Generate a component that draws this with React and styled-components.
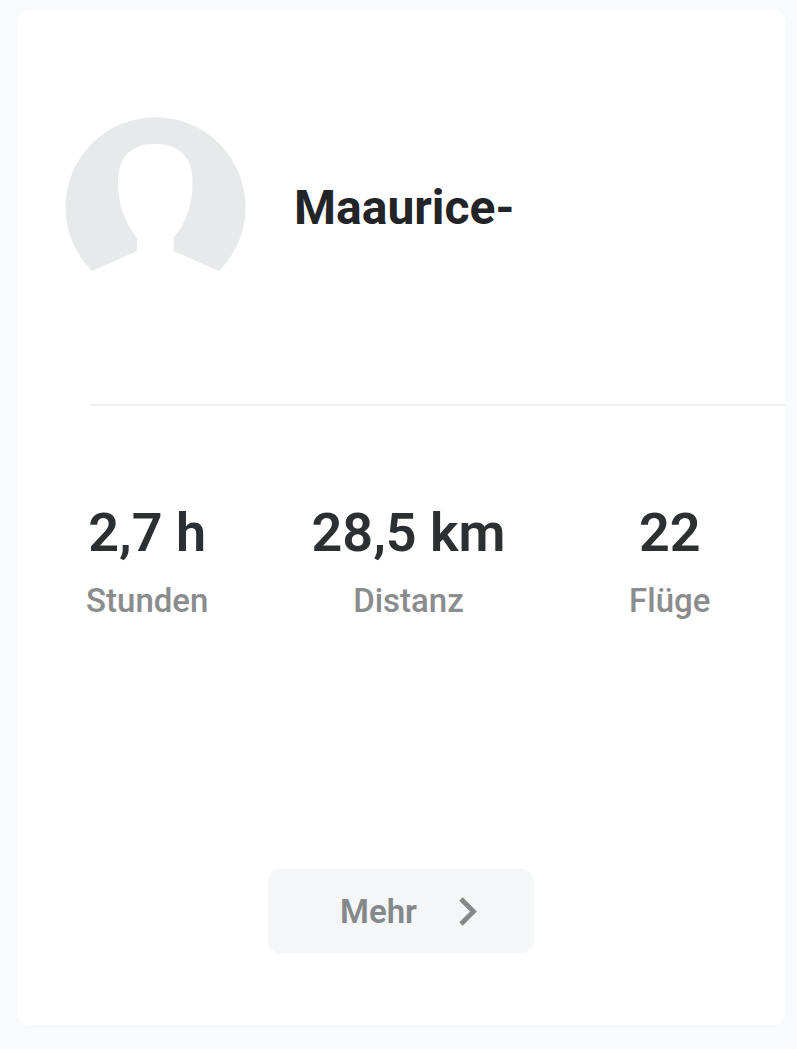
import React from "react";
import styled, { createGlobalStyle } from "styled-components";

const GlobalStyle = createGlobalStyle`
  * {
    box-sizing: border-box;
  }
  body {
    margin: 0;
    background: #f7f9fb;
    font-family: Roboto, "Liberation Sans", sans-serif;
  }
`;

const Page = styled.main`
  padding: 10px 12px 24px 17px;
`;

const Card = styled.section`
  display: flex;
  flex-direction: column;
  background: #fff;
  border-radius: 12px;
  padding-bottom: 72px;
`;

const Profile = styled.header`
  display: flex;
  align-items: center;
  gap: 48px;
  padding: 107px 48px 106px;
`;

const Avatar = styled.svg`
  flex: none;
  width: 181px;
  height: 181px;
`;

const Name = styled.h1`
  margin: 0;
  color: #222427;
  font-size: 48px;
  line-height: 56px;
  font-weight: 700;
`;

const Divider = styled.hr`
  width: auto;
  margin: 0 0 0 73px;
  border: 0;
  border-top: 2px solid #eeefef;
`;

const Stats = styled.dl`
  display: grid;
  grid-template-columns: repeat(3, 1fr);
  column-gap: 68px;
  margin: 0;
  padding: 95px 19px 0 34px;
`;

const Stat = styled.div`
  display: flex;
  flex-direction: column-reverse;
  gap: 16px;
  text-align: center;
`;

const Label = styled.dt`
  color: #8a8c8e;
  font-size: 33px;
  line-height: 40px;
  font-weight: 500;
`;

const Value = styled.dd`
  margin: 0;
  color: #2d3033;
  font-size: 54px;
  line-height: 64px;
  font-weight: 600;
  white-space: nowrap;
`;

const MoreButton = styled.button`
  display: flex;
  align-items: center;
  align-self: center;
  gap: 40px;
  margin-top: 248px;
  padding: 23px 55px 21px 72px;
  border: 0;
  border-radius: 12px;
  background: #f4f6f8;
  color: #85888a;
  font-family: inherit;
  font-size: 33px;
  line-height: 40px;
  font-weight: 600;
  cursor: pointer;
`;

const stats = [
  { label: "Stunden", value: "2,7 h" },
  { label: "Distanz", value: "28,5 km" },
  { label: "Flüge", value: "22" },
];

function App() {
  return (
    <Page>
      <GlobalStyle />
      <Card>
        <Profile>
          <Avatar viewBox="0 0 181 181" aria-hidden="true">
            <path
              fill="#e7e9eb"
              d="M27 154A90 90 0 1 1 154 154L108.500 134V121C122 104 127.500 88 127.500 64C127.500 40 114 27 90 27S53 40 53 64C53 88 59 104 72 121V134Z"
            />
          </Avatar>
          <Name>Maaurice-</Name>
        </Profile>
        <Divider />
        <Stats>
          {stats.map((stat) => (
            <Stat key={stat.label}>
              <Label>{stat.label}</Label>
              <Value>{stat.value}</Value>
            </Stat>
          ))}
        </Stats>
        <MoreButton type="button">
          Mehr
          <svg width="22" height="32" viewBox="0 0 22 32" aria-hidden="true">
            <path
              d="M4 3L16.500 15.500L4 28"
              fill="none"
              stroke="currentColor"
              strokeWidth="4.8"
            />
          </svg>
        </MoreButton>
      </Card>
    </Page>
  );
}

export default App;
